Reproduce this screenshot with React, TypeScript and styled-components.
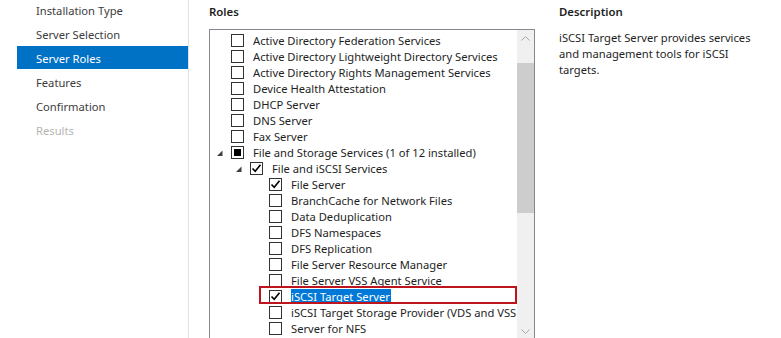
import React from "react";
import styled, { createGlobalStyle } from "styled-components";

const Global = createGlobalStyle`
  html, body { margin: 0; padding: 0; background: #fff; overflow: hidden; }
  body {
    font-family: "Noto Sans", "Open Sans", sans-serif;
    font-size: 11.2px;
    color: #1e1e1e;
  }
`;

const Page = styled.div`
  display: flex;
  width: 781px;
  height: 338px;
  overflow: hidden;
`;

const Nav = styled.nav`
  flex-shrink: 0;
  width: 189px;
  box-sizing: border-box;
  margin-top: -2px;
  padding-left: 17px;
  border-right: 1px solid #e2e2e2;
  display: flex;
  flex-direction: column;
`;

const NavItem = styled.div<{ $active?: boolean; $disabled?: boolean }>`
  box-sizing: border-box;
  height: 24px;
  padding-top: 1px;
  border-bottom: 1px solid transparent;
  background-clip: padding-box;
  display: flex;
  align-items: center;
  padding-left: 19px;
  font-size: 11.2px;
  color: ${(p) => (p.$active ? "#fff" : p.$disabled ? "#b4b4b4" : "#3c3c3c")};
  background-color: ${(p) => (p.$active ? "#0072c6" : "transparent")};
`;

const Main = styled.main`
  display: flex;
  padding-left: 20px;
  gap: 24px;
`;

const RolesCol = styled.section`
  width: 326px;
  display: flex;
  flex-direction: column;
`;

const Heading = styled.h2`
  margin: 0;
  padding-top: 4px;
  line-height: 16px;
  font-size: 11.4px;
  font-weight: 600;
  color: #1e1e1e;
`;

const ListBox = styled.div`
  margin-top: 9px;
  height: 312px;
  box-sizing: border-box;
  border: 1px solid #828790;
  display: flex;
`;

const Viewport = styled.div`
  flex: 1;
  overflow: hidden;
  padding-top: 2px;
`;

const ScrollBar = styled.div`
  width: 17px;
  flex-shrink: 0;
  background: #f0f0f0;
  display: flex;
  flex-direction: column;
`;

const ScrollBtn = styled.div`
  height: 17px;
  display: flex;
  align-items: center;
  justify-content: center;
`;

const Track = styled.div`
  flex: 1;
  padding-top: 16px;
`;

const Thumb = styled.div`
  height: 150px;
  background: #cdcdcd;
`;

const Row = styled.div<{ $level: number }>`
  position: relative;
  height: 16px;
  display: flex;
  align-items: center;
  padding-left: ${(p) => 2 + 19 * p.$level}px;
  white-space: nowrap;
  font-size: 11.2px;
  color: #1e1e1e;
`;

const Expander = styled.div`
  width: 19px;
  height: 16px;
  flex-shrink: 0;
`;

const Box = styled.div`
  width: 13px;
  height: 13px;
  box-sizing: border-box;
  border: 1px solid #333;
  background: #fff;
  flex-shrink: 0;
  margin-right: 9px;
  display: flex;
  align-items: center;
  justify-content: center;
`;

const Partial = styled.div`
  width: 7px;
  height: 7px;
  background: #000;
`;

const Label = styled.span<{ $selected?: boolean }>`
  line-height: 15px;
  padding-right: 1px;
  background: ${(p) => (p.$selected ? "#0078d7" : "transparent")};
  color: ${(p) => (p.$selected ? "#fff" : "inherit")};
`;

const Callout = styled.div`
  position: absolute;
  left: 49px;
  right: 0;
  top: -2px;
  height: 18px;
  box-sizing: border-box;
  border: 2px solid #c0141c;
  pointer-events: none;
`;

const DescCol = styled.section`
  width: 205px;
  display: flex;
  flex-direction: column;
`;

const DescText = styled.p`
  margin: 10px 0 0;
  line-height: 16px;
  font-size: 11.2px;
  color: #1e1e1e;
`;

type State = "none" | "checked" | "partial";
type Item = { label: string; level: number; state: State; expanded?: boolean; selected?: boolean };

const items: Item[] = [
  { label: "Active Directory Federation Services", level: 0, state: "none" },
  { label: "Active Directory Lightweight Directory Services", level: 0, state: "none" },
  { label: "Active Directory Rights Management Services", level: 0, state: "none" },
  { label: "Device Health Attestation", level: 0, state: "none" },
  { label: "DHCP Server", level: 0, state: "none" },
  { label: "DNS Server", level: 0, state: "none" },
  { label: "Fax Server", level: 0, state: "none" },
  { label: "File and Storage Services (1 of 12 installed)", level: 0, state: "partial", expanded: true },
  { label: "File and iSCSI Services", level: 1, state: "checked", expanded: true },
  { label: "File Server", level: 2, state: "checked" },
  { label: "BranchCache for Network Files", level: 2, state: "none" },
  { label: "Data Deduplication", level: 2, state: "none" },
  { label: "DFS Namespaces", level: 2, state: "none" },
  { label: "DFS Replication", level: 2, state: "none" },
  { label: "File Server Resource Manager", level: 2, state: "none" },
  { label: "File Server VSS Agent Service", level: 2, state: "none" },
  { label: "iSCSI Target Server", level: 2, state: "checked", selected: true },
  { label: "iSCSI Target Storage Provider (VDS and VSS hardware providers)", level: 2, state: "none" },
  { label: "Server for NFS", level: 2, state: "none" },
  { label: "Work Folders", level: 2, state: "none" },
  { label: "Storage Services (Installed)", level: 1, state: "checked" },
];

const ExpandArrow = () => (
  <svg width="19" height="16" viewBox="0 0 19 16">
    <polygon points="10.5,6.5 10.5,12 5,12" fill="#404040" />
  </svg>
);

const Check = () => (
  <svg width="11" height="11" viewBox="0 0 11 11">
    <path d="M1.5 5.5 L4.2 8.3 L9.5 1.8" fill="none" stroke="#000" strokeWidth="1.6" />
  </svg>
);

const Chevron = ({ down }: { down?: boolean }) => (
  <svg width="9" height="5" viewBox="0 0 9 5">
    <path
      d={down ? "M0.5 0.5 L4.5 4.5 L8.5 0.5" : "M0.5 4.5 L4.5 0.5 L8.5 4.5"}
      fill="none"
      stroke="#a6a6a6"
      strokeWidth="1"
    />
  </svg>
);

const navItems = [
  "Installation Type",
  "Server Selection",
  "Server Roles",
  "Features",
  "Confirmation",
  "Results",
];

export default function App() {
  return (
    <>
      <Global />
      <Page>
        <Nav>
          {navItems.map((n) => (
            <NavItem key={n} $active={n === "Server Roles"} $disabled={n === "Results"}>
              {n}
            </NavItem>
          ))}
        </Nav>
        <Main>
          <RolesCol>
            <Heading>Roles</Heading>
            <ListBox>
              <Viewport>
                {items.map((it) => (
                  <Row key={it.label} $level={it.level}>
                    <Expander>{it.expanded && <ExpandArrow />}</Expander>
                    <Box>
                      {it.state === "checked" && <Check />}
                      {it.state === "partial" && <Partial />}
                    </Box>
                    <Label $selected={it.selected}>{it.label}</Label>
                    {it.selected && <Callout />}
                  </Row>
                ))}
              </Viewport>
              <ScrollBar>
                <ScrollBtn>
                  <Chevron />
                </ScrollBtn>
                <Track>
                  <Thumb />
                </Track>
                <ScrollBtn>
                  <Chevron down />
                </ScrollBtn>
              </ScrollBar>
            </ListBox>
          </RolesCol>
          <DescCol>
            <Heading>Description</Heading>
            <DescText>
              iSCSI Target Server provides services and management tools for iSCSI targets.
            </DescText>
          </DescCol>
        </Main>
      </Page>
    </>
  );
}
